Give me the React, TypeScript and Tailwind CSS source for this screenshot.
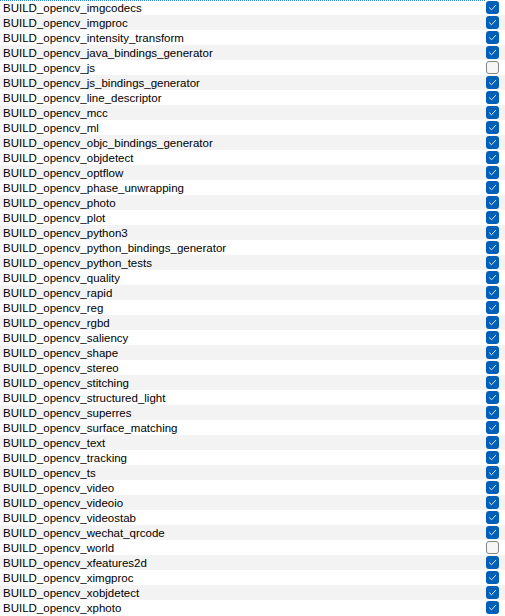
const modules: [string, boolean][] = [
  ['imgcodecs', true],
  ['imgproc', true],
  ['intensity_transform', true],
  ['java_bindings_generator', true],
  ['js', false],
  ['js_bindings_generator', true],
  ['line_descriptor', true],
  ['mcc', true],
  ['ml', true],
  ['objc_bindings_generator', true],
  ['objdetect', true],
  ['optflow', true],
  ['phase_unwrapping', true],
  ['photo', true],
  ['plot', true],
  ['python3', true],
  ['python_bindings_generator', true],
  ['python_tests', true],
  ['quality', true],
  ['rapid', true],
  ['reg', true],
  ['rgbd', true],
  ['saliency', true],
  ['shape', true],
  ['stereo', true],
  ['stitching', true],
  ['structured_light', true],
  ['superres', true],
  ['surface_matching', true],
  ['text', true],
  ['tracking', true],
  ['ts', true],
  ['video', true],
  ['videoio', true],
  ['videostab', true],
  ['wechat_qrcode', true],
  ['world', false],
  ['xfeatures2d', true],
  ['ximgproc', true],
  ['xobjdetect', true],
  ['xphoto', true],
];

function CheckBox({ checked }: { checked: boolean }) {
  if (!checked) {
    return <div className="w-[13px] h-[13px] rounded-[3px] border border-[#858585] bg-[#f6f6f6]" />;
  }
  return (
    <div className="w-[13px] h-[13px] rounded-[3px] bg-[#005fb8] flex items-center justify-center">
      <svg width="9" height="9" viewBox="0 0 9 9" fill="none">
        <path d="M1.5 4.8 L3.6 6.8 L7.6 2.4" stroke="#dfe9f5" strokeWidth="1" strokeLinecap="round" strokeLinejoin="round" />
      </svg>
    </div>
  );
}

export default function App() {
  return (
    <div className="w-[505px] h-[616px] overflow-hidden bg-white font-['Liberation_Sans',Arial,sans-serif] text-[11.5px] text-black">
      {modules.map(([name, on], i) => (
        <div
          key={name}
          className={`relative h-[15px] flex items-center pl-[3px] pr-[6px] ${i % 2 === 1 ? 'bg-[#f3f3f3]' : 'bg-white'}`}
        >
          {i === 0 && (
            <div className="absolute left-0 top-0 w-[485px] border-t border-dotted border-[#2b88d8]" />
          )}
          <span className="flex-1 pt-[1px] leading-[14px] whitespace-nowrap">BUILD_opencv_{name}</span>
          <CheckBox checked={on} />
        </div>
      ))}
    </div>
  );
}
